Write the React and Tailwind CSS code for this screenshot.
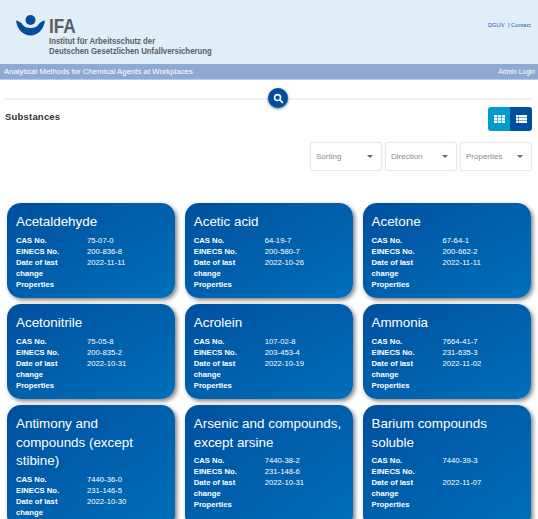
const cards = [
  { t: "Acetaldehyde", c: "75-07-0", e: "200-836-8", d: "2022-11-11" },
  { t: "Acetic acid", c: "64-19-7", e: "200-580-7", d: "2022-10-26" },
  { t: "Acetone", c: "67-64-1", e: "200-662-2", d: "2022-11-11" },
  { t: "Acetonitrile", c: "75-05-8", e: "200-835-2", d: "2022-10-31" },
  { t: "Acrolein", c: "107-02-8", e: "203-453-4", d: "2022-10-19" },
  { t: "Ammonia", c: "7664-41-7", e: "231-635-3", d: "2022-11-02" },
  { t: "Antimony and compounds (except stibine)", c: "7440-36-0", e: "231-146-5", d: "2022-10-30" },
  { t: "Arsenic and compounds, except arsine", c: "7440-38-2", e: "231-148-6", d: "2022-10-31" },
  { t: "Barium compounds soluble", c: "7440-39-3", e: "", d: "2022-11-07" },
];

function Row({ label, value }) {
  return (
    <div className="flex">
      <div className="w-[71px] shrink-0 pr-[10px] font-bold">{label}</div>
      <div>{value}</div>
    </div>
  );
}

function Card({ t, c, e, d }) {
  return (
    <div className="min-h-[95px] rounded-[14px] bg-gradient-to-br from-[#00509f] to-[#006fba] px-[9px] pt-[10px] text-white shadow-[2px_2px_4px_rgba(0,0,0,0.5)]">
      <div className="mb-[3px] text-[13.4px] leading-[18.6px]">{t}</div>
      <div className="text-[7.7px] leading-[11px]">
        <Row label="CAS No." value={c} />
        <Row label="EINECS No." value={e} />
        <Row label="Date of last change" value={d} />
        <Row label="Properties" value="" />
      </div>
    </div>
  );
}

function Select({ label }) {
  return (
    <div className="flex h-[29px] w-[72px] items-center justify-between rounded-[3px] border border-[#e8e8e8] bg-white pl-[5px] pr-[8px] text-[8px] text-[#8a8a8a] shadow-[0_0_2px_rgba(0,0,0,0.08)]">
      <span>{label}</span>
      <svg width="6" height="3" viewBox="0 0 6 3"><path d="M0 0h6L3 3z" fill="#666" /></svg>
    </div>
  );
}

export default function App() {
  return (
    <div className="h-[519px] overflow-hidden bg-white font-['Liberation_Sans',Arial,sans-serif]">
      <header className="flex h-[64px] items-start justify-between bg-[#e1edf7] pl-[16px] pr-[7px]">
        <div className="pt-[15px]">
          <div className="flex items-start">
            <svg width="29" height="21" viewBox="0 0 29 21" className="mr-[4px]">
              <circle cx="14.5" cy="5" r="5" fill="#004f9f" />
              <path d="M0 5.5 C3 6 5 7.5 6.5 9.5 C8 12 11 13 14.5 13 C18 13 21 12 22.5 9.5 C24 7.5 26 6 29 5.5 C28 14 22 20.5 14.5 20.5 C7 20.5 1 14 0 5.5Z" fill="#004f9f" />
            </svg>
            <span className="mt-[1px] origin-left scale-x-[0.82] text-[21px] font-bold leading-[20px] text-[#5a5f63]">IFA</span>
          </div>
          <div className="ml-[33px] origin-left scale-x-[0.82] whitespace-nowrap text-[9.5px] font-bold leading-[10px] text-[#5a5f63]">
            <div>Institut für Arbeitsschutz der</div>
            <div>Deutschen Gesetzlichen Unfallversicherung</div>
          </div>
        </div>
        <div className="pt-[21px] text-[5.8px] text-[#1f5fa8]">DGUV &nbsp;| Contact</div>
      </header>
      <div className="flex h-[16px] items-center justify-between border-b border-[#b9cbe6] bg-[#8eaad3] pl-[4px] pr-[3px] text-white">
        <span className="text-[7.8px]">Analytical Methods for Chemical Agents at Workplaces</span>
        <span className="text-[6.6px]">Admin Login</span>
      </div>
      <div className="mt-[17px] flex items-center pl-[5px] pr-[6px]">
        <div className="h-[2px] flex-1 bg-[#f0f0f0]" />
        <div className="relative z-10 -my-[8px] flex h-[20px] w-[20px] shrink-0 -translate-y-[1px] items-center justify-center rounded-full bg-[#004f9f] shadow-[0_1px_3px_rgba(0,0,0,0.5)]">
          <svg width="11" height="11" viewBox="0 0 24 24" fill="none" stroke="white" strokeWidth="3.5"><circle cx="10" cy="10" r="6.5" /><path d="M15 15l6.5 6.5" /></svg>
        </div>
        <div className="h-[2px] w-[244px] bg-[#f0f0f0]" />
      </div>
      <div className="mt-[6px] flex items-start justify-between pl-[5px] pr-[6px]">
        <div className="pt-[3px] text-[9.5px] font-bold leading-[14px] tracking-[0.2px] text-[#333]">Substances</div>
        <div className="flex">
          <div className="flex h-[24px] w-[22px] items-center justify-center rounded-l-[3px] bg-[#009ccb]">
            <svg width="11" height="8" viewBox="0 0 11 8" fill="white"><rect width="3.2" height="2.4" /><rect x="3.9" width="3.2" height="2.4" /><rect x="7.8" width="3.2" height="2.4" /><rect y="2.8" width="3.2" height="2.4" /><rect x="3.9" y="2.8" width="3.2" height="2.4" /><rect x="7.8" y="2.8" width="3.2" height="2.4" /><rect y="5.6" width="3.2" height="2.4" /><rect x="3.9" y="5.6" width="3.2" height="2.4" /><rect x="7.8" y="5.6" width="3.2" height="2.4" /></svg>
          </div>
          <div className="flex h-[24px] w-[22px] items-center justify-center rounded-r-[3px] bg-[#004f9f]">
            <svg width="11" height="8" viewBox="0 0 11 8" fill="white"><rect width="2.5" height="2.4" /><rect x="3" width="8" height="2.4" /><rect y="2.8" width="2.5" height="2.4" /><rect x="3" y="2.8" width="8" height="2.4" /><rect y="5.6" width="2.5" height="2.4" /><rect x="3" y="5.6" width="8" height="2.4" /></svg>
          </div>
        </div>
      </div>
      <div className="mt-[11px] flex justify-end gap-[3px] pr-[6px]">
        <Select label="Sorting" />
        <Select label="Direction" />
        <Select label="Properties" />
      </div>
      <div className="mt-[32px] grid grid-cols-[168px_168px_168px] gap-x-[9.75px] gap-y-[6px] pl-[7px]">
        {cards.map((x) => <Card key={x.t} {...x} />)}
      </div>
    </div>
  );
}
